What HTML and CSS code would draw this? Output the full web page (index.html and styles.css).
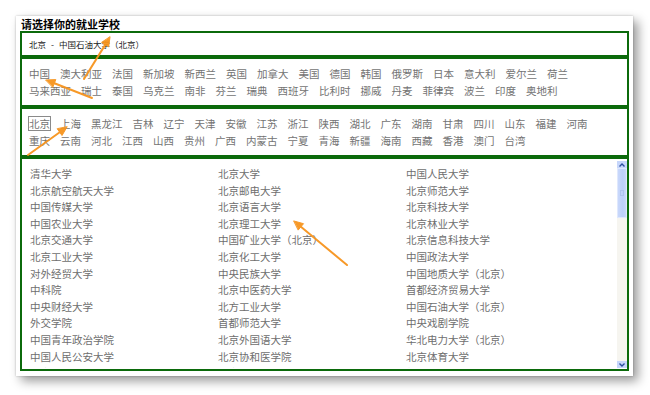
FILE: index.html
```html
<!DOCTYPE html>
<html lang="zh-CN">
<head>
<meta charset="utf-8">
<title>请选择你的就业学校</title>
<link rel="stylesheet" href="styles.css">
</head>
<body>
<div class="panel">
  <div class="title">请选择你的就业学校</div>
  <div class="box box-sel">
    <span class="sel">北京<span class="sep">-</span>中国石油大学（北京）</span>
  </div>
  <div class="box box-tags">
    <div class="row">
      <span class="tag">中国</span><span class="tag">澳大利亚</span><span class="tag">法国</span><span class="tag">新加坡</span><span class="tag">新西兰</span><span class="tag">英国</span><span class="tag">加拿大</span><span class="tag">美国</span><span class="tag">德国</span><span class="tag">韩国</span><span class="tag">俄罗斯</span><span class="tag">日本</span><span class="tag">意大利</span><span class="tag">爱尔兰</span><span class="tag">荷兰</span>
    </div>
    <div class="row">
      <span class="tag">马来西亚</span><span class="tag">瑞士</span><span class="tag">泰国</span><span class="tag">乌克兰</span><span class="tag">南非</span><span class="tag">芬兰</span><span class="tag">瑞典</span><span class="tag">西班牙</span><span class="tag">比利时</span><span class="tag">挪威</span><span class="tag">丹麦</span><span class="tag">菲律宾</span><span class="tag">波兰</span><span class="tag">印度</span><span class="tag">奥地利</span>
    </div>
  </div>
  <div class="box box-tags">
    <div class="row">
      <span class="tag active">北京</span><span class="tag">上海</span><span class="tag">黑龙江</span><span class="tag">吉林</span><span class="tag">辽宁</span><span class="tag">天津</span><span class="tag">安徽</span><span class="tag">江苏</span><span class="tag">浙江</span><span class="tag">陕西</span><span class="tag">湖北</span><span class="tag">广东</span><span class="tag">湖南</span><span class="tag">甘肃</span><span class="tag">四川</span><span class="tag">山东</span><span class="tag">福建</span><span class="tag">河南</span>
    </div>
    <div class="row">
      <span class="tag">重庆</span><span class="tag">云南</span><span class="tag">河北</span><span class="tag">江西</span><span class="tag">山西</span><span class="tag">贵州</span><span class="tag">广西</span><span class="tag">内蒙古</span><span class="tag">宁夏</span><span class="tag">青海</span><span class="tag">新疆</span><span class="tag">海南</span><span class="tag">西藏</span><span class="tag">香港</span><span class="tag">澳门</span><span class="tag">台湾</span>
    </div>
  </div>
  <div class="box box-list">
    <div class="list">
      <span>清华大学</span><span>北京大学</span><span>中国人民大学</span>
      <span>北京航空航天大学</span><span>北京邮电大学</span><span>北京师范大学</span>
      <span>中国传媒大学</span><span>北京语言大学</span><span>北京科技大学</span>
      <span>中国农业大学</span><span>北京理工大学</span><span>北京林业大学</span>
      <span>北京交通大学</span><span>中国矿业大学（北京）</span><span>北京信息科技大学</span>
      <span>北京工业大学</span><span>北京化工大学</span><span>中国政法大学</span>
      <span>对外经贸大学</span><span>中央民族大学</span><span>中国地质大学（北京）</span>
      <span>中科院</span><span>北京中医药大学</span><span>首都经济贸易大学</span>
      <span>中央财经大学</span><span>北方工业大学</span><span>中国石油大学（北京）</span>
      <span>外交学院</span><span>首都师范大学</span><span>中央戏剧学院</span>
      <span>中国青年政治学院</span><span>北京外国语大学</span><span>华北电力大学（北京）</span>
      <span>中国人民公安大学</span><span>北京协和医学院</span><span>北京体育大学</span>
      <span>北京工商大学</span><span>北京联合大学</span><span>首都医科大学</span>
    </div>
    <div class="scrollbar">
      <div class="sb-btn">
        <svg width="10" height="6" viewBox="0 0 10 6"><path d="M2.5 4.5 L5 2 L7.5 4.5" fill="none" stroke="#2c4f9e" stroke-width="1.4"/></svg>
      </div>
      <div class="sb-thumb"><div class="grip"></div></div>
      <div class="sb-track"></div>
      <div class="sb-btn">
        <svg width="10" height="6" viewBox="0 0 10 6"><path d="M2.5 1.5 L5 4 L7.5 1.5" fill="none" stroke="#2c4f9e" stroke-width="1.4"/></svg>
      </div>
    </div>
  </div>
</div>
<svg class="arrows" width="650" height="395" viewBox="0 0 650 395">
  <g stroke="#f7941d" stroke-width="2" stroke-linecap="round" fill="#f7941d" opacity="0.95">
    <line x1="84" y1="79" x2="105.3" y2="44.6"/>
    <polygon points="110,37 108.7,46.8 101.9,42.6" stroke-width="1"/>
    <line x1="92" y1="98" x2="54.4" y2="83.3"/>
    <polygon points="46,80 55.8,79.6 52.9,87" stroke-width="1"/>
    <line x1="28" y1="155" x2="59.7" y2="132.3"/>
    <polygon points="67,127 62,135.5 57.4,129" stroke-width="1"/>
    <line x1="347" y1="265" x2="300.9" y2="226.8"/>
    <polygon points="294,221 303.5,223.7 298.4,229.8" stroke-width="1"/>
  </g>
</svg>
</body>
</html>
```

FILE: styles.css
```css
html, body {
  margin: 0;
  padding: 0;
  background: #ffffff;
}
body {
  width: 650px;
  height: 395px;
  overflow: hidden;
  position: relative;
  font-family: "Noto Sans CJK SC", "Noto Sans", sans-serif;
}
.panel {
  margin: 16px 0 0 16px;
  width: 617px;
  box-sizing: border-box;
  padding: 0 4px 5px 4px;
  background: #fff;
  box-shadow: 5px 5px 10px rgba(0, 0, 0, 0.4), 0 0 2px rgba(0, 0, 0, 0.25);
  display: flex;
  flex-direction: column;
}
.title {
  height: 15px;
  line-height: 16px;
  font-size: 11px;
  font-weight: bold;
  color: #000;
  padding-left: 1px;
}
.box {
  border: 2px solid #0b6a0b;
  box-sizing: border-box;
}
.box-sel {
  height: 26px;
  display: flex;
  align-items: center;
  padding-left: 7px;
}
.sel {
  font-size: 8.5px;
  color: #1a1a1a;
  line-height: 10px;
}
.sep {
  margin: 0 5px;
}
.box-tags {
  padding: 6px 7px 6px 6px;
  display: flex;
  flex-direction: column;
}
.row {
  height: 17px;
  display: flex;
  align-items: center;
  gap: 8px;
}
.tag {
  font-size: 10.5px;
  line-height: 13px;
  color: #737373;
  border: 1px solid transparent;
  white-space: nowrap;
}
.tag.active {
  border-color: #8a8a8a;
}
.box-list {
  height: 214px;
  display: flex;
  padding: 2px 0 1px 0;
}
.list {
  flex: 1;
  overflow: hidden;
  display: grid;
  grid-template-columns: 188px 188px 1fr;
  grid-auto-rows: 16.6px;
  align-content: start;
  padding: 5px 0 0 8px;
}
.list span {
  font-size: 10.5px;
  line-height: 16.6px;
  color: #6e6e6e;
  white-space: nowrap;
}
.scrollbar {
  width: 10px;
  display: flex;
  flex-direction: column;
  background: #f5f4ef;
}
.sb-btn {
  height: 7px;
  background: #c6d6fb;
  display: flex;
  align-items: center;
  justify-content: center;
}
.sb-btn svg {
  display: block;
}
.sb-thumb {
  height: 50px;
  background: linear-gradient(to right, #c9d8fb, #bcd0fa 60%, #c9d8fb);
  border: 1px solid #dfe8fd;
  box-sizing: border-box;
  display: flex;
  align-items: center;
  justify-content: center;
}
.grip {
  width: 4px;
  height: 6px;
  border: 1px solid #aec3ee;
  box-sizing: border-box;
}
.sb-track {
  flex: 1;
  background: #f6f5f0;
}
.arrows {
  position: absolute;
  left: 0;
  top: 0;
  pointer-events: none;
}
```
